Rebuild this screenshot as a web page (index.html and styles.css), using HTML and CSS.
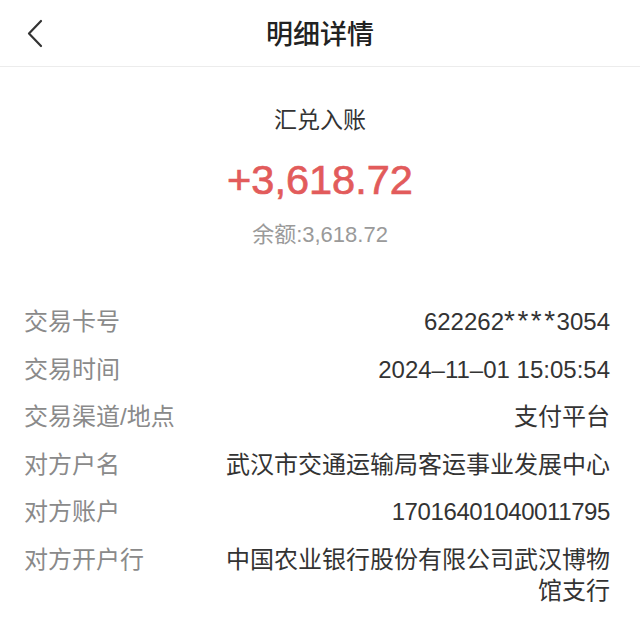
FILE: index.html
```html
<!DOCTYPE html>
<html lang="zh-CN">
<head>
<meta charset="utf-8">
<title>明细详情</title>
<link rel="stylesheet" href="styles.css">
</head>
<body>
<div class="page">
  <header class="topbar">
    <button class="back" aria-label="返回">
      <svg width="20" height="30" viewBox="0 0 20 30"><path d="M15 2 L3 14.5 L15 27" fill="none" stroke="#333" stroke-width="2.2" stroke-linecap="round" stroke-linejoin="round"/></svg>
    </button>
    <h1 class="title">明细详情</h1>
  </header>
  <section class="summary">
    <div class="type">汇兑入账</div>
    <div class="amount">+3,618.72</div>
    <div class="balance">余额:3,618.72</div>
  </section>
  <section class="details">
    <div class="row"><div class="label">交易卡号</div><div class="value">622262<span class="mask">****</span>3054</div></div>
    <div class="row"><div class="label">交易时间</div><div class="value">2024–11–01 15:05:54</div></div>
    <div class="row"><div class="label">交易渠道/地点</div><div class="value">支付平台</div></div>
    <div class="row"><div class="label">对方户名</div><div class="value">武汉市交通运输局客运事业发展中心</div></div>
    <div class="row"><div class="label">对方账户</div><div class="value tight">17016401040011795</div></div>
    <div class="row"><div class="label">对方开户行</div><div class="value">中国农业银行股份有限公司武汉博物馆支行</div></div>
  </section>
</div>
</body>
</html>
```
FILE: styles.css
```css
* { box-sizing: border-box; }
html, body { margin: 0; padding: 0; background: #fff; }
body {
  font-family: "Liberation Sans", "Noto Sans CJK SC", sans-serif;
  color: #333;
}
.page { width: 640px; }
.topbar {
  height: 67px;
  border-bottom: 1px solid #ececec;
  display: flex;
  align-items: center;
  justify-content: center;
  position: relative;
}
.back {
  position: absolute;
  left: 26px;
  top: 19px;
  border: 0;
  background: none;
  padding: 0;
  width: 24px;
  height: 30px;
  display: flex;
}
.title {
  margin: 0;
  font-size: 27px;
  font-weight: 500;
  color: #222;
  line-height: 36px;
  font-family: "Noto Sans CJK SC", sans-serif;
}
.summary {
  display: flex;
  flex-direction: column;
  align-items: center;
  padding-top: 38px;
}
.type {
  font-size: 23px;
  line-height: 30px;
  color: #333;
}
.amount {
  margin-top: 21px;
  font-size: 41.5px;
  line-height: 48px;
  color: #e25b5b;
  -webkit-text-stroke: 0.7px #e25b5b;
}
.balance {
  margin-top: 17px;
  font-size: 22px;
  line-height: 28px;
  color: #9a9a9a;
}
.details {
  display: flex;
  flex-direction: column;
  gap: 16.6px;
  padding: 0 30px 0 24px;
  margin-top: 57px;
}
.row {
  display: flex;
  justify-content: space-between;
  font-size: 24px;
  line-height: 31px;
}
.label {
  color: #8a8a8a;
  flex: 0 0 auto;
  white-space: nowrap;
}
.value {
  color: #333;
  text-align: right;
  width: 386px;
}
.mask {
  font-size: 28px;
  line-height: 20px;
  letter-spacing: 2.5px;
  margin-right: -1px;
}
.tight {
  letter-spacing: -0.4px;
}
```
